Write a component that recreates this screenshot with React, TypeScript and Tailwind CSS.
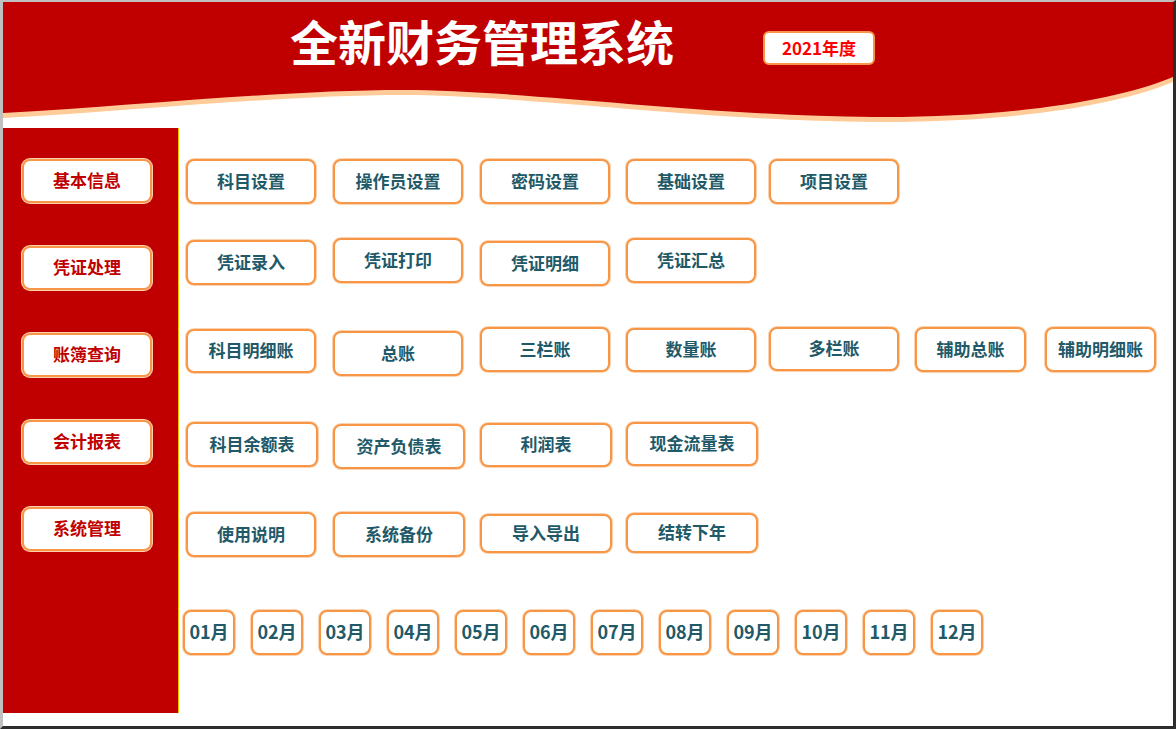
import React from 'react';

const WAVE =
  'M0,0 H1170 V75 C1110,100 1000,116 870,115 C700,114 520,88 400,88 C280,88 130,104 0,111 Z';

const btnBase =
  'flex items-center justify-center shrink-0 pb-[3px] bg-white border-2 border-[#f79646] ring-1 ring-[#fcd3b0] rounded-[8px] font-bold leading-none';

const SideBtn = ({ label }: { label: string }) => (
  <div className={`${btnBase} w-[130px] h-[44px] text-[17px] text-[#c00000]`}>{label}</div>
);

const Btn = ({ label, className }: { label: string; className: string }) => (
  <div className={`${btnBase} text-[17px] text-[#215968] ${className}`}>{label}</div>
);

const months = ['01月', '02月', '03月', '04月', '05月', '06月', '07月', '08月', '09月', '10月', '11月', '12月'];

export default function App() {
  return (
    <div className="relative w-[1176px] h-[729px] overflow-hidden bg-white border-t-2 border-l-[3px] border-r-[3px] border-b-[3px] border-t-[#c0c0c0] border-l-[#c0c0c0] border-r-[#2d2d2d] border-b-[#2d2d2d] font-['Noto_Sans_CJK_SC',sans-serif]">
      {/* top of the right edge is light */}
      <div className="absolute right-[-3px] top-0 w-[3px] h-[76px] bg-[#c8c8c8]" />

      <header className="relative h-[126px]">
        <svg className="absolute inset-0" width="1170" height="126" viewBox="0 0 1170 126">
          <path d={WAVE} fill="#ffcc99" transform="translate(0,5)" />
          <path d={WAVE} fill="#c00000" />
        </svg>
        <div className="relative flex items-start pl-[287px] pt-[14px]">
          <h1 className="text-[48px] leading-none font-bold text-white">全新财务管理系统</h1>
          <div className="ml-[89px] mt-[15px] w-[112px] h-[34px] pb-[2px] flex items-center justify-center bg-white border-2 border-[#f79646] rounded-[6px] text-[17px] font-bold text-[#ff0000] leading-none">
            2021年度
          </div>
        </div>
      </header>

      <div className="flex">
        <aside className="w-[176px] h-[585px] bg-[#c00000] border-r border-[#ffc000] flex flex-col items-start pl-[19px] pt-[31px] gap-[43px]">
          <SideBtn label="基本信息" />
          <SideBtn label="凭证处理" />
          <SideBtn label="账簿查询" />
          <SideBtn label="会计报表" />
          <SideBtn label="系统管理" />
        </aside>

        <main className="flex-1 flex flex-col">
          <div className="flex items-start h-[50px] mt-[31px]">
            <Btn label="科目设置" className="w-[130px] h-[45px] ml-[7px]" />
            <Btn label="操作员设置" className="w-[130px] h-[45px] ml-[17px]" />
            <Btn label="密码设置" className="w-[130px] h-[45px] ml-[17px]" />
            <Btn label="基础设置" className="w-[130px] h-[45px] ml-[16px]" />
            <Btn label="项目设置" className="w-[130px] h-[45px] ml-[13px]" />
          </div>

          <div className="flex items-start h-[50px] mt-[29px]">
            <Btn label="凭证录入" className="w-[130px] h-[45px] ml-[7px] mt-[2px]" />
            <Btn label="凭证打印" className="w-[130px] h-[45px] ml-[17px]" />
            <Btn label="凭证明细" className="w-[130px] h-[45px] ml-[17px] mt-[3px]" />
            <Btn label="凭证汇总" className="w-[130px] h-[45px] ml-[16px]" />
          </div>

          <div className="flex items-start h-[50px] mt-[39px]">
            <Btn label="科目明细账" className="w-[130px] h-[44px] ml-[7px] mt-[2px]" />
            <Btn label="总账" className="w-[130px] h-[45px] ml-[17px] mt-[4px]" />
            <Btn label="三栏账" className="w-[130px] h-[45px] ml-[17px]" />
            <Btn label="数量账" className="w-[130px] h-[44px] ml-[16px] mt-[1px]" />
            <Btn label="多栏账" className="w-[130px] h-[44px] ml-[13px]" />
            <Btn label="辅助总账" className="w-[111px] h-[45px] ml-[16px]" />
            <Btn label="辅助明细账" className="w-[111px] h-[45px] ml-[19px]" />
          </div>

          <div className="flex items-start h-[50px] mt-[45px]">
            <Btn label="科目余额表" className="w-[132px] h-[45px] ml-[7px]" />
            <Btn label="资产负债表" className="w-[132px] h-[45px] ml-[15px] mt-[2px]" />
            <Btn label="利润表" className="w-[132px] h-[44px] ml-[15px] mt-[1px]" />
            <Btn label="现金流量表" className="w-[132px] h-[44px] ml-[14px]" />
          </div>

          <div className="flex items-start h-[50px] mt-[40px]">
            <Btn label="使用说明" className="w-[130px] h-[45px] ml-[7px]" />
            <Btn label="系统备份" className="w-[132px] h-[45px] ml-[17px]" />
            <Btn label="导入导出" className="w-[132px] h-[39px] ml-[15px] mt-[2px]" />
            <Btn label="结转下年" className="w-[132px] h-[40px] ml-[14px] mt-[1px]" />
          </div>

          <div className="flex items-start gap-[16px] pl-[4px] mt-[48px]">
            {months.map((m) => (
              <div
                key={m}
                className={`${btnBase} w-[52px] h-[45px] text-[18px] text-[#215968]`}
              >
                {m}
              </div>
            ))}
          </div>
        </main>
      </div>
    </div>
  );
}
